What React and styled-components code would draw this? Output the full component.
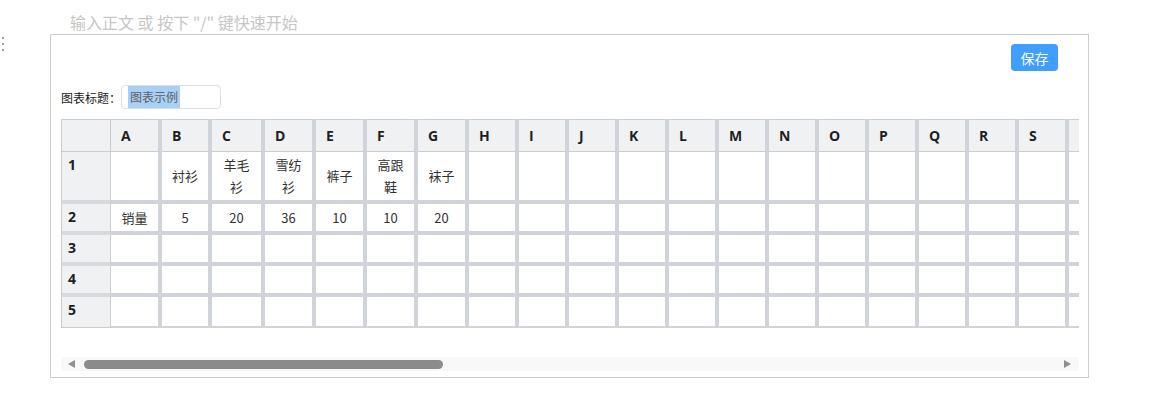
import React from "react";
import styled, { createGlobalStyle } from "styled-components";

const GlobalStyle = createGlobalStyle`
  html, body {
    margin: 0;
    padding: 0;
    background: #fff;
  }
  body {
    font-family: "Open Sans", "Noto Sans CJK SC", sans-serif;
    color: #333;
  }
  * {
    box-sizing: border-box;
  }
`;

const Page = styled.div`
  width: 1162px;
  padding: 11px 0 0 50px;
`;

const Placeholder = styled.div`
  height: 23px;
  margin-left: 20px;
  font-size: 16px;
  line-height: 22px;
  color: #c6c6c6;
  font-family: "Noto Sans CJK SC", sans-serif;
`;

const Block = styled.div`
  position: relative;
  width: 1039px;
`;

const Handle = styled.div`
  position: absolute;
  left: -48px;
  top: 3px;
  display: flex;
  flex-direction: column;
  gap: 4px;
`;

const Dot = styled.span`
  width: 2px;
  height: 2px;
  border-radius: 50%;
  background: #7e7e7e;
`;

const ChartBox = styled.div`
  border: 1px solid #cdcdcd;
  padding: 9px 9px 6px 10px;
  display: flex;
  flex-direction: column;
`;

const Toolbar = styled.div`
  display: flex;
  justify-content: flex-end;
  padding-right: 21px;
`;

const SaveButton = styled.button`
  width: 47px;
  height: 27px;
  border: none;
  border-radius: 4px;
  background: #409eff;
  color: #fff;
  font-size: 14px;
  font-family: "Noto Sans CJK SC", sans-serif;
  padding: 0;
  cursor: pointer;
`;

const TitleRow = styled.div`
  display: flex;
  align-items: center;
  margin-top: 14px;
  height: 24px;
`;

const Label = styled.span`
  width: 60px;
  font-size: 12px;
  color: #1a1a1a;
  font-family: "Noto Sans CJK SC", sans-serif;
`;

const FakeInput = styled.div`
  width: 100px;
  height: 24px;
  border: 1px solid #dcdfe6;
  border-radius: 4px;
  padding: 0 0 0 6px;
  display: flex;
  align-items: stretch;
`;

const Selected = styled.span`
  background: #a8d0f4;
  color: #5f6266;
  font-size: 12px;
  line-height: 22px;
  padding: 0 2px;
  font-family: "Noto Sans CJK SC", sans-serif;
`;

const ScrollArea = styled.div`
  margin-top: 10px;
  width: 1018px;
  overflow: hidden;
`;

const Sheet = styled.table`
  border-collapse: separate;
  border-spacing: 0;
  table-layout: fixed;
  width: ${(p) => p.$width}px;

  tbody tr:last-child td {
    border-bottom-width: 2px;
  }
  tbody tr:last-child th {
    border-bottom: 1px solid #cccccc;
  }
`;

const Corner = styled.th`
  width: 50px;
  height: 33px;
  background: #f0f1f3;
  border: 1px solid #cccccc;
`;

const ColHead = styled.th`
  width: ${(p) => p.$w}px;
  height: 33px;
  background: #f0f1f3;
  border-top: 1px solid #cccccc;
  border-bottom: 1px solid #cccccc;
  border-right: 4px solid #d0d4da;
  padding: 0 0 0 10px;
  text-align: left;
  font-size: 14px;
  font-weight: 700;
  color: #1f1f1f;
  white-space: nowrap;
  overflow: hidden;
`;

const RowHead = styled.th`
  height: 31px;
  background: #f0f1f3;
  border-left: 1px solid #cccccc;
  border-right: 1px solid #cccccc;
  border-bottom: 4px solid #d6d9dd;
  padding: 5px 0 0 6px;
  vertical-align: top;
  text-align: left;
  font-size: 14px;
  line-height: 16px;
  font-weight: 700;
  color: #1f1f1f;
`;

const Cell = styled.td`
  height: 31px;
  background: #fff;
  border-right: 4px solid #d0d4da;
  border-bottom: 4px solid #d0d4da;
  padding: 2px 6px;
  text-align: center;
  vertical-align: middle;
  font-size: 13px;
  line-height: 22px;
  color: #333;
  font-family: "Noto Sans CJK SC", sans-serif;
  overflow: hidden;
`;

const ScrollBar = styled.div`
  margin-top: 29px;
  width: 1018px;
  height: 14px;
  background: #f8f8f8;
  display: flex;
  align-items: center;
  padding: 0 8px 0 7px;
`;

const Arrow = styled.span`
  width: 0;
  height: 0;
  border-top: 4px solid transparent;
  border-bottom: 4px solid transparent;
  ${(p) =>
    p.$dir === "left"
      ? "border-right: 7px solid #8f8f8f;"
      : "border-left: 7px solid #8f8f8f;"}
`;

const Thumb = styled.span`
  margin-left: 9px;
  width: 359px;
  height: 9px;
  border-radius: 5px;
  background: #8b8b8b;
`;

const Track = styled.span`
  flex: 1;
`;

const letters = "ABCDEFGHIJKLMNOPQRST".split("");
const widths = [51, 50, 53, 51, 51, 51, 51];
const colWidth = (i) => widths[i] || 50;

const rows = [
  ["", "衬衫", "羊毛衫", "雪纺衫", "裤子", "高跟鞋", "袜子"],
  ["销量", "5", "20", "36", "10", "10", "20"],
  [],
  [],
  [],
];

const tableWidth = 50 + letters.reduce((sum, _, i) => sum + colWidth(i), 0);

export default function App() {
  return (
    <Page>
      <GlobalStyle />
      <Placeholder>输入正文 或 按下 "/" 键快速开始</Placeholder>
      <Block>
        <Handle>
          <Dot />
          <Dot />
          <Dot />
        </Handle>
        <ChartBox>
          <Toolbar>
            <SaveButton>保存</SaveButton>
          </Toolbar>
          <TitleRow>
            <Label>图表标题：</Label>
            <FakeInput>
              <Selected>图表示例</Selected>
            </FakeInput>
          </TitleRow>
          <ScrollArea>
            <Sheet $width={tableWidth}>
              <thead>
                <tr>
                  <Corner />
                  {letters.map((l, i) => (
                    <ColHead key={l} $w={colWidth(i)}>
                      {l}
                    </ColHead>
                  ))}
                </tr>
              </thead>
              <tbody>
                {rows.map((row, r) => (
                  <tr key={r}>
                    <RowHead>{r + 1}</RowHead>
                    {letters.map((l, c) => (
                      <Cell key={l}>{row[c] || ""}</Cell>
                    ))}
                  </tr>
                ))}
              </tbody>
            </Sheet>
          </ScrollArea>
          <ScrollBar>
            <Arrow $dir="left" />
            <Thumb />
            <Track />
            <Arrow $dir="right" />
          </ScrollBar>
        </ChartBox>
      </Block>
    </Page>
  );
}
